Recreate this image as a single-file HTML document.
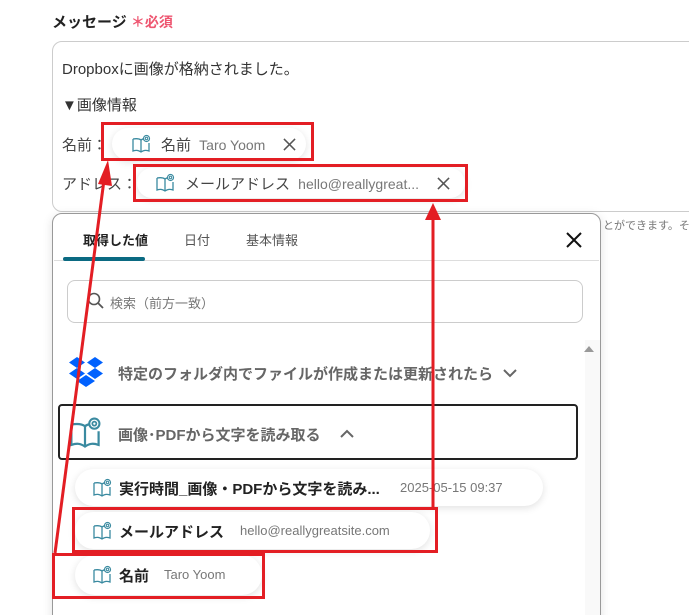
<!DOCTYPE html>
<html><head><meta charset="utf-8"><style>
*{margin:0;padding:0;box-sizing:border-box}
html,body{width:689px;height:615px;overflow:hidden}
body{background:#fff;position:relative;font-family:"Liberation Sans","Noto Sans CJK JP",sans-serif;color:#333}
.a{position:absolute;white-space:nowrap}
.pill{position:absolute;background:#fff;border-radius:20px;box-shadow:0 2px 8px rgba(0,0,0,.12)}
</style></head><body>
<svg width="0" height="0" style="position:absolute"><defs>
<symbol id="bk" viewBox="0 0 20 20"><path d="M2 5v12c3-1 5-1 8 1c3-2 5-2 8-1V9M10 18V6C8 4.5 5 4.5 2 5M10 6c1-.8 2-1.1 3-1.2" fill="none" stroke="#3a8aa0" stroke-width="1.3"/><circle cx="15.5" cy="4.5" r="3" fill="none" stroke="#3a8aa0" stroke-width="1.2"/><circle cx="15.5" cy="4.5" r="1.2" fill="none" stroke="#3a8aa0" stroke-width="1"/></symbol>
<symbol id="x" viewBox="0 0 14 14"><path d="M1 1L13 13M13 1L1 13" stroke="#555" stroke-width="1.6"/></symbol>
</defs></svg>

<div class="a" style="left:52px;top:11px;font-size:15px;font-weight:bold;color:#222">メッセージ <span style="color:#ee5570;font-size:14px">＊必須</span></div>
<div class="a" style="left:52px;top:41px;width:660px;height:171px;border:1px solid #ccc;border-radius:10px"></div>
<div class="a" style="left:62px;top:58px;font-size:15px;color:#333">Dropboxに画像が格納されました。</div>
<div class="a" style="left:62px;top:94px;font-size:15px;color:#333">▼画像情報</div>
<div class="a" style="left:62px;top:134px;font-size:15px;color:#444">名前：</div>
<div class="a" style="left:62px;top:173px;font-size:15px;color:#444">アドレス：</div>
<div class="pill" style="left:112px;top:128px;width:194px;height:32px"></div>
<svg class="a" style="left:131px;top:134px" width="20" height="20"><use href="#bk"/></svg>
<div class="a" style="left:161px;top:134px;font-size:15px;color:#444">名前 <span style="font-size:14px;color:#777;margin-left:4px">Taro Yoom</span></div>
<svg class="a" style="left:283px;top:138px" width="13" height="13"><use href="#x"/></svg>
<div class="pill" style="left:137px;top:168px;width:328px;height:30px"></div>
<svg class="a" style="left:155px;top:173px" width="20" height="20"><use href="#bk"/></svg>
<div class="a" style="left:185px;top:173px;font-size:15px;color:#444">メールアドレス <span style="font-size:14px;color:#777;margin-left:4px">hello@reallygreat...</span></div>
<svg class="a" style="left:437px;top:177px" width="13" height="13"><use href="#x"/></svg>
<div class="a" style="left:603px;top:217px;font-size:11px;color:#777">とができます。そ</div>

<div class="a" style="left:52px;top:213px;width:549px;height:420px;border:1px solid #999;border-radius:10px;background:#fff;box-shadow:0 2px 10px rgba(0,0,0,.12)"></div>
<div class="a" style="left:83px;top:230px;font-size:13px;font-weight:bold;color:#222">取得した値</div>
<div class="a" style="left:184px;top:230px;font-size:13px;color:#555">日付</div>
<div class="a" style="left:246px;top:230px;font-size:13px;color:#555">基本情報</div>
<div class="a" style="left:54px;top:260px;width:545px;height:1px;background:#ddd"></div>
<div class="a" style="left:63px;top:257px;width:82px;height:4px;background:#0b6a82;border-radius:2px"></div>
<svg class="a" style="left:566px;top:232px" width="16" height="16"><path d="M1 1L15 15M15 1L1 15" stroke="#111" stroke-width="2"/></svg>
<div class="a" style="left:67px;top:280px;width:516px;height:43px;border:1px solid #ccc;border-radius:8px"></div>
<svg class="a" style="left:87px;top:292px" width="18" height="18"><circle cx="7" cy="7" r="5.5" fill="none" stroke="#555" stroke-width="1.6"/><path d="M11 11L16 16" stroke="#555" stroke-width="1.8"/></svg>
<div class="a" style="left:110px;top:293px;font-size:13px;color:#777">検索（前方一致）</div>
<div class="a" style="left:585px;top:340px;width:15px;height:275px;background:#f9f9f9"></div>
<svg class="a" style="left:583px;top:345px" width="12" height="8"><path d="M1 7L6 1L11 7Z" fill="#999"/></svg>

<svg class="a" style="left:68px;top:356px" width="36" height="34" viewBox="0 0 36 34"><path d="M9 1L1 6.5L9 12L17 6.5ZM27 1L19 6.5L27 12L35 6.5ZM1 17.5L9 23L17 17.5L9 12ZM19 17.5L27 23L35 17.5L27 12ZM9 25L18 31L27 25L18 19Z" fill="#0061fe"/></svg>
<div class="a" style="left:118px;top:363px;font-size:15px;font-weight:bold;color:#666">特定のフォルダ内でファイルが作成または更新されたら</div>
<svg class="a" style="left:503px;top:369px" width="14" height="9"><path d="M1 1L7 7L13 1" fill="none" stroke="#666" stroke-width="2"/></svg>
<div class="a" style="left:58px;top:404px;width:520px;height:56px;border:2px solid #222;border-radius:4px"></div>
<svg class="a" style="left:68px;top:416px" width="34" height="34"><use href="#bk"/></svg>
<div class="a" style="left:118px;top:424px;font-size:15px;font-weight:bold;color:#666">画像･PDFから文字を読み取る</div>
<svg class="a" style="left:340px;top:429px" width="14" height="9"><path d="M1 8L7 2L13 8" fill="none" stroke="#666" stroke-width="2"/></svg>

<div class="pill" style="left:75px;top:469px;width:468px;height:37px"></div>
<svg class="a" style="left:92px;top:478px" width="20" height="20"><use href="#bk"/></svg>
<div class="a" style="left:119px;top:478px;font-size:15px;font-weight:bold;color:#222">実行時間_画像・PDFから文字を読み...</div>
<div class="a" style="left:400px;top:480px;font-size:13px;color:#777">2025-05-15 09:37</div>
<div class="pill" style="left:75px;top:512px;width:355px;height:37px"></div>
<svg class="a" style="left:92px;top:521px" width="20" height="20"><use href="#bk"/></svg>
<div class="a" style="left:119px;top:521px;font-size:15px;font-weight:bold;color:#222">メールアドレス</div>
<div class="a" style="left:240px;top:523px;font-size:13px;color:#777">hello@reallygreatsite.com</div>
<div class="pill" style="left:75px;top:555px;width:187px;height:40px"></div>
<svg class="a" style="left:92px;top:565px" width="20" height="20"><use href="#bk"/></svg>
<div class="a" style="left:119px;top:565px;font-size:15px;font-weight:bold;color:#222">名前</div>
<div class="a" style="left:164px;top:567px;font-size:13px;color:#777">Taro Yoom</div>

<svg class="a" style="left:0;top:0" width="689" height="615">
<g fill="none" stroke="#e31e24" stroke-width="3">
<rect x="102.5" y="123.5" width="210" height="36"/>
<rect x="134.5" y="165.5" width="332" height="35"/>
<rect x="73.5" y="508.5" width="363" height="43"/>
<rect x="53.5" y="554.5" width="210" height="43"/>
<path d="M55 553L104 180"/>
<path d="M433 508L433 218"/>
</g>
<g fill="#e31e24"><path d="M108 160L98 184L112 186Z"/><path d="M433 203L425 220L441 220Z"/></g>
</svg>
</body></html>
